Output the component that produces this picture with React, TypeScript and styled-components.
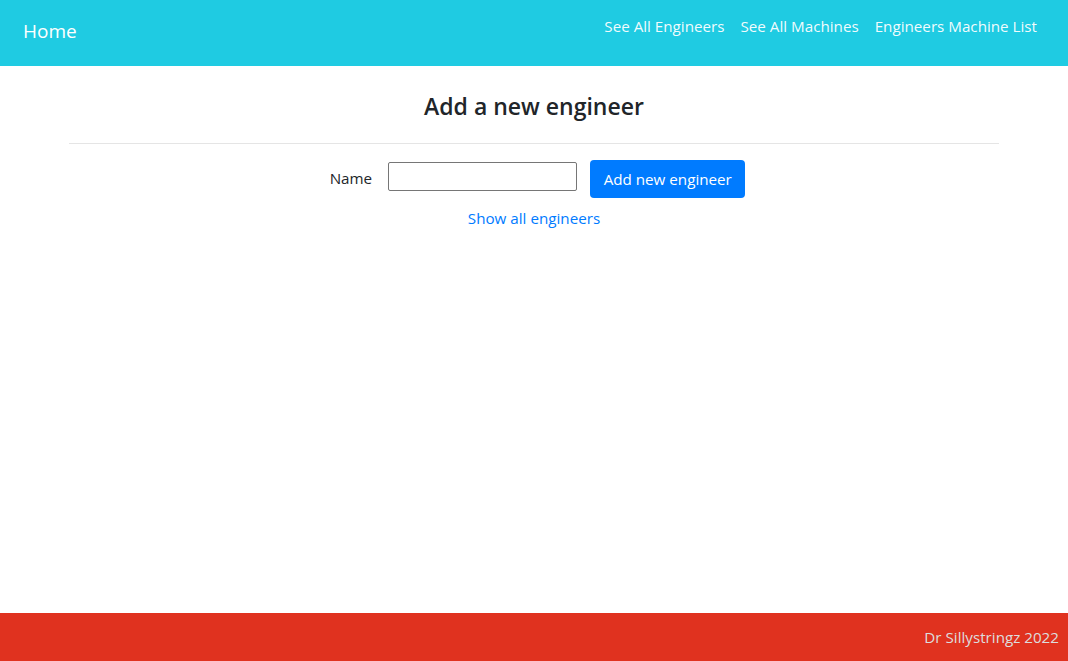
import React from 'react';
import styled, { createGlobalStyle } from 'styled-components';

const colors = {
    nav: '#1fcbe2',
    footer: '#e0321f',
    primary: '#007bff',
    text: '#212529',
    rule: '#e5e5e5'
};

const baseSize = '15.2px';

const GlobalStyle = createGlobalStyle`
    html, body {
        margin: 0;
        padding: 0;
    }
    body {
        font-family: 'Segoe UI', 'Open Sans', 'Noto Sans', sans-serif;
        color: ${colors.text};
        background: #fff;
    }
    * {
        box-sizing: border-box;
    }
`;

const Page = styled.div`
    min-height: 100vh;
    display: flex;
    flex-direction: column;
`;

const NavBar = styled.nav`
    height: 66px;
    background-color: ${colors.nav};
    display: flex;
    justify-content: space-between;
    align-items: flex-start;
    padding: 0 31px 0 23px;
`;

const Brand = styled.a`
    color: #fff;
    font-size: 19px;
    line-height: 30px;
    margin-top: 16px;
    text-decoration: none;
`;

const NavList = styled.ul`
    list-style: none;
    margin: 14px 0 0;
    padding: 0;
    display: flex;
    gap: 16px;
`;

const NavLink = styled.a`
    color: rgba(255, 255, 255, 0.95);
    font-size: ${baseSize};
    line-height: 24px;
    text-decoration: none;
`;

const Main = styled.main`
    flex: 1;
    width: 930px;
    margin: 0 auto;
    display: flex;
    flex-direction: column;
    align-items: center;
`;

const Title = styled.h1`
    font-size: 23px;
    font-weight: 600;
    line-height: 29px;
    margin: 26px 0 0;
`;

const Rule = styled.hr`
    width: 100%;
    border: 0;
    border-top: 1px solid ${colors.rule};
    margin: 22px 0 16px;
`;

const Form = styled.form`
    display: flex;
    align-items: center;
    margin-left: 7px;
`;

const Label = styled.label`
    font-size: ${baseSize};
    margin: 0 16px 2px 0;
`;

const Input = styled.input`
    width: 189px;
    height: 29px;
    border: 1px solid #767676;
    border-radius: 2px;
    margin: 0 13px 5px 0;
    font: inherit;
`;

const Button = styled.button`
    height: 38px;
    padding: 0 13.5px;
    border: 0;
    border-radius: 4px;
    background-color: ${colors.primary};
    color: #fff;
    font-family: inherit;
    font-size: ${baseSize};
`;

const TextLink = styled.a`
    color: ${colors.primary};
    font-size: ${baseSize};
    line-height: 24px;
    margin-top: 8px;
    text-decoration: none;
`;

const Footer = styled.footer`
    height: 48px;
    background-color: ${colors.footer};
    display: flex;
    align-items: center;
    justify-content: flex-end;
    padding: 0 9px;
    color: #ddd;
    font-size: ${baseSize};
`;

const App = () => {
    return (
        <Page>
            <GlobalStyle />
            <NavBar>
                <Brand href="#">Home</Brand>
                <NavList>
                    <li>
                        <NavLink href="#">See All Engineers</NavLink>
                    </li>
                    <li>
                        <NavLink href="#">See All Machines</NavLink>
                    </li>
                    <li>
                        <NavLink href="#">Engineers Machine List</NavLink>
                    </li>
                </NavList>
            </NavBar>
            <Main>
                <Title>Add a new engineer</Title>
                <Rule />
                <Form onSubmit={e => e.preventDefault()}>
                    <Label htmlFor="name">Name</Label>
                    <Input id="name" type="text" />
                    <Button type="submit">Add new engineer</Button>
                </Form>
                <TextLink href="#">Show all engineers</TextLink>
            </Main>
            <Footer>Dr Sillystringz 2022</Footer>
        </Page>
    );
};

export default App;
